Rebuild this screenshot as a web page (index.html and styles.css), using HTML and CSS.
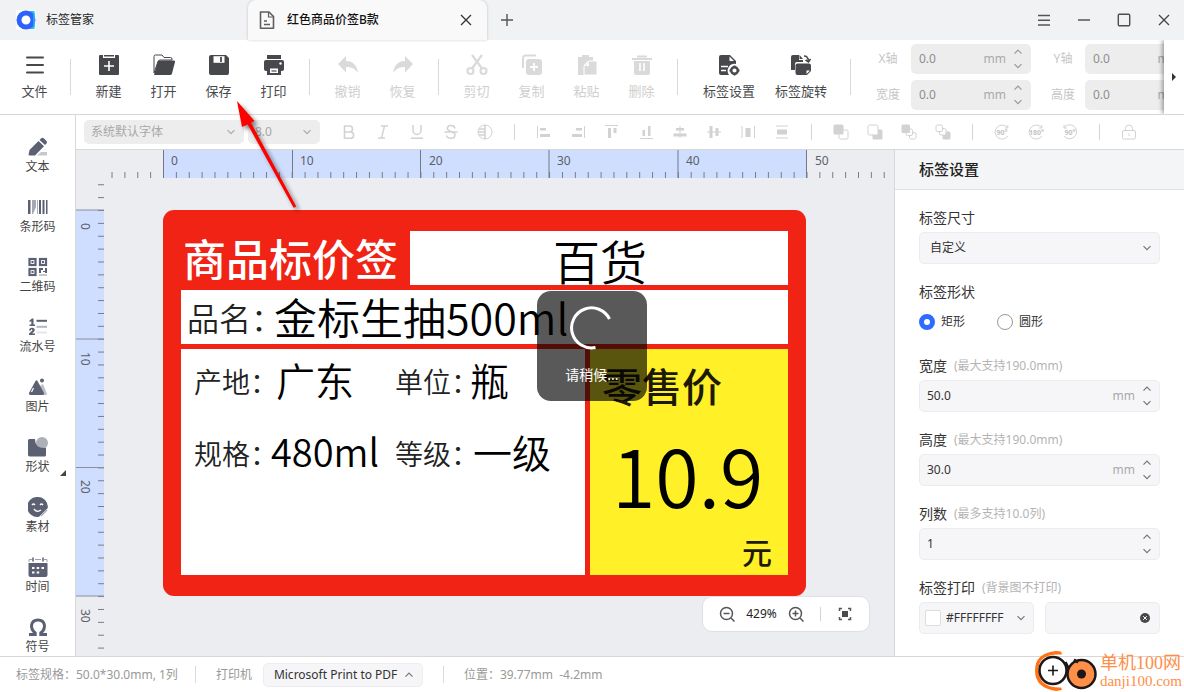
FILE: index.html
```html
<!DOCTYPE html>
<html lang="zh-CN">
<head>
<meta charset="utf-8">
<title>标签管家</title>
<link rel="stylesheet" href="styles.css">
</head>
<body>
<svg class="defs" aria-hidden="true">
  <symbol id="down" viewBox="0 0 10 10"><path d="M1.5 3.2 5 6.7l3.500-3.500" fill="none" stroke="currentColor" stroke-width="1.200"/></symbol>
  <symbol id="up" viewBox="0 0 10 10"><path d="M1.500 6.700 5 3.200l3.500 3.500" fill="none" stroke="currentColor" stroke-width="1.200"/></symbol>
</svg>

<header class="titlebar">
  <div class="app-tab">
    <svg class="app-logo" viewBox="0 0 20 20"><rect width="20" height="20" fill="#fff"/><path d="M18.500 1v18h-5l3-9-3-9z" fill="#1fc3f0"/><circle cx="10" cy="10" r="7" fill="#fff" stroke="#2f62fb" stroke-width="5"/><path d="M18 3v14" stroke="#22b8f4" stroke-width="1.500"/></svg>
    <span>标签管家</span>
  </div>
  <div class="doc-tab">
    <svg class="i18" viewBox="0 0 18 20" fill="none" stroke="#5d5e61" stroke-width="1.600"><path d="M2.500 2h8.500l4.500 4.500V18.200h-13z" stroke-linejoin="round"/><path d="M10.500 2v5h5" stroke-width="1.200"/><path d="M6 11h3M6 14.500h6"/></svg>
    <strong>红色商品价签B款</strong>
    <button class="plain" aria-label="关闭标签"><svg class="i14" viewBox="0 0 14 14" fill="none" stroke="#333" stroke-width="1.300"><path d="M2 2l10 10M12 2 2 12"/></svg></button>
  </div>
  <button class="plain add" aria-label="新标签"><svg class="i14" viewBox="0 0 14 14" fill="none" stroke="#555" stroke-width="1.400"><path d="M7 1v12M1 7h12"/></svg></button>
  <div class="window-buttons">
    <button class="plain" aria-label="菜单"><svg class="i14" viewBox="0 0 14 14" stroke="#555" stroke-width="1.400"><path d="M1 2.500h12M1 7.200h12M1 12h12"/></svg></button>
    <button class="plain" aria-label="最小化"><svg class="i14" viewBox="0 0 14 14" stroke="#555" stroke-width="1.500"><path d="M1 7h12"/></svg></button>
    <button class="plain" aria-label="最大化"><svg class="i14" viewBox="0 0 14 14" fill="none" stroke="#4c4d50" stroke-width="1.400"><rect x="1.300" y="1.300" width="11.400" height="11.400" rx="1"/></svg></button>
    <button class="plain" aria-label="关闭"><svg class="i14" viewBox="0 0 14 14" fill="none" stroke="#444" stroke-width="1.300"><path d="M2 2l10 10M12 2 2 12"/></svg></button>
  </div>
</header>

<nav class="toolbar">
  <button class="tool"><svg viewBox="0 0 24 24" stroke="#47484c" stroke-width="2" stroke-linecap="round"><path d="M4 4.500h16M4 12h16M4 19.500h16"/></svg>文件</button>
  <i class="sep"></i>
  <button class="tool"><svg viewBox="0 0 24 24"><path d="M3 2h3v3h12V2h3a1 1 0 0 1 1 1v18a1 1 0 0 1-1 1H3a1 1 0 0 1-1-1V3a1 1 0 0 1 1-1z"/><path d="M7 2h10v1.500H7z"/><path d="M12 8v10M7 13h10" stroke="#fff" stroke-width="1.600"/></svg>新建</button>
  <button class="tool"><svg viewBox="0 0 24 24"><path d="M2 20V3.500Q2 2 3.500 2H10l2 2.500h6.500q1.500 0 1.500 1.500v1H8Q6.500 7 6 8.500z" fill="#fff" stroke="#47484c"/><path d="M7 7.500h15q1.500 0 1 1.500l-3 11.500q-.4 1.500-2 1.500H2l3.500-12.500q.4-2 1.500-2z"/></svg>打开</button>
  <button class="tool"><svg viewBox="0 0 24 24"><path d="M4 2h15l3 3v15a2 2 0 0 1-2 2H4a2 2 0 0 1-2-2V4a2 2 0 0 1 2-2z"/><path d="M6.500 3.200h11v6.600h-11z" fill="#fff"/><path d="M14 4v5" stroke="#47484c" stroke-width="1.800"/></svg>保存</button>
  <button class="tool"><svg viewBox="0 0 24 24"><path d="M5 2h14v4H5z"/><rect x="2" y="7" width="20" height="11" rx="2"/><path d="M5 14h14v8H5z"/><path d="M8 15.500h8v4.500H8z" fill="#fff"/><path d="M9.500 18h5" stroke="#47484c" stroke-width="1.200"/><circle cx="18.500" cy="10.500" r="1.200" fill="#fff"/></svg>打印</button>
  <i class="sep"></i>
  <button class="tool off" disabled><svg viewBox="0 0 24 24"><path d="M10 3v5c7 0 11 4.500 12 12-3-4-6-6-12-6v5.500L2 11z"/></svg>撤销</button>
  <button class="tool off" disabled><svg viewBox="0 0 24 24"><path d="M14 3v5C7 8 3 12.500 2 20c3-4 6-6 12-6v5.500L22 11z"/></svg>恢复</button>
  <i class="sep"></i>
  <button class="tool off" disabled><svg viewBox="0 0 24 24" fill="none" stroke="#dadada" stroke-width="2.200"><circle cx="5.500" cy="18" r="3"/><circle cx="18.500" cy="18" r="3"/><path d="M17 15.500 7 2M7 15.500 17 2"/></svg>剪切</button>
  <button class="tool off" disabled><svg viewBox="0 0 24 24"><path d="M3 15V5a2.500 2.500 0 0 1 2.500-2.500H16" fill="none" stroke="#dadada" stroke-width="2"/><rect x="6" y="6" width="16" height="16" rx="3"/><path d="M14 10v8M10 14h8" stroke="#fff" stroke-width="1.800"/></svg>复制</button>
  <button class="tool off" disabled><svg viewBox="0 0 24 24"><path d="M7 2h7v2h4v4h-5l-4 4v10H3V4h4z"/><path d="M14 8h8v14H9V13z" stroke="#fff"/><path d="M14 9v4h-4z" fill="#fff"/></svg>粘贴</button>
  <button class="tool off" disabled><svg viewBox="0 0 24 24"><path d="M7 2.500h10v2H7zM2 5h20v2H2zM4 8h16v12a2 2 0 0 1-2 2H6a2 2 0 0 1-2-2z"/><path d="M10 10v8M14 10v8" stroke="#fff" stroke-width="1.600"/></svg>删除</button>
  <i class="sep"></i>
  <div class="wide-tools">
    <button class="tool"><svg viewBox="0 0 24 24"><path d="M4 2h9l6 6v3a7 7 0 0 0-7 11H4a2 2 0 0 1-2-2V4a2 2 0 0 1 2-2z"/><path d="M12.500 3.500V8H17z" fill="#fff"/><path d="M4 13.500h7M4 17.500h5" stroke="#fff" stroke-width="1.400"/><circle cx="17.500" cy="17.500" r="3.300" fill="none" stroke="#47484c" stroke-width="2.400"/><path d="M17.500 12.500v2M17.500 20.500v2M12.500 17.500h2M20.500 17.500h2" stroke="#47484c" stroke-width="2"/></svg>标签设置</button>
    <button class="tool"><svg viewBox="0 0 24 24"><path d="M4 2h6v5h4v2H8q-2 0-2 2v6H2V4q0-2 2-2z"/><path d="M10.500 2 14 6h-3.500z"/><path d="M15 3q4 0 4.500 5M16.500 7l3 2 2-3" fill="none" stroke="#47484c" stroke-width="1.600"/><path d="M8.500 10.500H20q2 0 2 2V18l-4 4H8.500q-2 0-2-2v-7.500q0-2 2-2z"/><path d="M17.500 21v-3.500H21z" fill="#fff"/></svg>标签旋转</button>
  </div>
  <i class="sep"></i>
  <div class="coords">
    <label for="px">X轴</label>
    <div class="number"><input id="px" value="0.0" disabled><span>mm</span><div class="steps"><button disabled aria-label="增加"><svg><use href="#up"/></svg></button><button disabled aria-label="减少"><svg><use href="#down"/></svg></button></div></div>
    <label for="py" class="second">Y轴</label>
    <div class="number"><input id="py" value="0.0" disabled><span>mm</span><div class="steps"></div></div>
    <label for="pw">宽度</label>
    <div class="number"><input id="pw" value="0.0" disabled><span>mm</span><div class="steps"><button disabled aria-label="增加"><svg><use href="#up"/></svg></button><button disabled aria-label="减少"><svg><use href="#down"/></svg></button></div></div>
    <label for="ph" class="second">高度</label>
    <div class="number"><input id="ph" value="0.0" disabled><span>mm</span><div class="steps"></div></div>
  </div>
  <button class="more" aria-label="更多"><svg viewBox="0 0 6 10"><path d="M1 1l4 4-4 4z" fill="#333"/></svg></button>
</nav>

<main class="main">
  <aside class="sidebar">
    <button><svg viewBox="0 0 20 20"><path d="M13 1.500q1.500-1.500 3 0l2.500 2.500q1 1.500 0 2.500l-1.500 1.500-5.500-5zM10.500 4l5.500 5.200L7 18.500H1.500L.5 18l1-5z"/><path d="M10 17.500l3-2.500h6v3.500H9z" opacity=".35"/></svg>文本</button>
    <button><svg viewBox="0 0 20 20"><path d="M0 3h2.500v14H0zM11 3h2v14h-2zM14.500 3h2v14h-2zM18 3h1.500v14H18z"/><path d="M4 3h4v7l-3 7H4z" opacity=".55"/><path d="M9 3h1v14H9z" opacity=".5"/></svg>条形码</button>
    <button><svg viewBox="0 0 20 20"><g fill="none" stroke="#5b6073" stroke-width="2.200"><rect x="1.500" y="2" width="6" height="6"/><rect x="12" y="2" width="6" height="6"/><rect x="1.500" y="12" width="6" height="6"/></g><path d="M3.500 4h2v2h-2zM14 4h2v2h-2zM3.500 14h2v2h-2zM11 11h4v3h2v-3h2v5h-2v-1h-2v-2h-2v3h-2z"/><path d="M11 17h8v2h-8z" opacity=".35"/></svg>二维码</button>
    <button><svg viewBox="0 0 20 20"><path d="M1.500 3.500 4 1.500h1.500v6h1.500V9H1.500V7.500h1.800V4.300l-1.800.8z"/><path d="M1 13.500q.3-2.800 3-2.800 3 .2 2.700 2.700-.3 1-2.500 3H7V18H1v-1.600l3.300-3q.3-1.200-.6-1.200-.8 0-1 1.300z"/><path d="M8.500 3.800h10.500" stroke="#5b6073" stroke-width="2"/><path d="M8.500 9.800h10.500" stroke="#b3b6c0" stroke-width="2"/><path d="M8.500 15.500h10.500" stroke="#e4e5e9" stroke-width="2"/></svg>流水号</button>
    <button><svg viewBox="0 0 20 20"><path d="M12 9l3-2 4 10q0 1-1 1h-4z" opacity=".4"/><path d="M7.500 4q1-1.500 2 0l6.500 12q.5 2-1.500 2h-12q-2 0-1.500-2z"/><circle cx="14" cy="3.500" r="2"/><path d="M3.500 15l2-4" stroke="#fff" stroke-width="1.300"/></svg>图片</button>
    <button class="has-more"><svg viewBox="0 0 20 20"><path d="M1.500 2H7q0 9 9 9h2v7q0 1.500-1.500 1.500h-14Q0 19.500 0 18V3.500Q0 2 1.500 2z"/><circle cx="14" cy="6" r="6" opacity=".5"/></svg>形状</button>
    <button><svg viewBox="0 0 20 20"><path d="M10 0a10 10 0 0 1 9.800 11L11 19.800A10 10 0 1 1 10 0z"/><path d="M4 8q1.500-2 3 0M12 8q1.500-2 3 0M6 12q3 4 7 1" fill="none" stroke="#fff" stroke-width="1.300"/><path d="M13 19l6-6" stroke="#aaadb9" stroke-width="1.500"/></svg>素材</button>
    <button><svg viewBox="0 0 20 20"><path d="M.5 6H19.500V18q0 2-2 2h-15q-2 0-2-2z"/><path d="M1 5V2.500h3M7 2.500h6M16 2.500h3V5" stroke="#9ea1ad" fill="none"/><path d="M5 .500v4M15 .500v4" stroke="#5b6073" stroke-width="1.500"/><path d="M4 11h2.500M8.700 11h2.500M13.500 11h2.500M4 15.500h2.500M8.700 15.500h2.500" stroke="#fff" stroke-width="2.200"/></svg>时间</button>
    <button><svg viewBox="0 0 20 20"><path d="M1 17.500H7.200v-1.500C1.500 11.500 2.500 3 10 3s8.500 8.500 2.800 13v1.500H19" stroke="#5b6073" stroke-width="3" fill="none"/></svg>符号</button>
  </aside>

  <div class="formatbar">
    <div class="select font"><select disabled aria-label="字体"><option>系统默认字体</option></select><svg><use href="#down"/></svg></div>
    <div class="select size"><select disabled aria-label="字号"><option>8.0</option></select><svg><use href="#down"/></svg></div>
    <div class="format-icons">
      <button aria-label="加粗"><svg viewBox="0 0 16 16" class="line"><path d="M3.500 2h5a3 3 0 0 1 0 6h-5zM3.500 8h6a3 3 0 0 1 0 6.300h-6z" stroke-width="1.600"/></svg></button>
      <button aria-label="斜体"><svg viewBox="0 0 16 16" class="line"><path d="M6 2h7M3 14h7M9.500 2l-3 12" stroke-width="1.400"/></svg></button>
      <button aria-label="下划线"><svg viewBox="0 0 16 16" class="line"><path d="M4 1v5.500a4 4 0 0 0 8 0V1M2 14.300h12" stroke-width="1.500"/></svg></button>
      <button aria-label="删除线"><svg viewBox="0 0 16 16" class="line"><path d="M12 4.500C11 .5 4 .8 4.300 4.500 4.500 8 12 7 12 11c0 4.500-8 4-8.500.5M1.500 8h13" stroke-width="1.500"/></svg></button>
      <button aria-label="反白"><svg viewBox="0 0 16 16" class="line"><circle cx="8" cy="8" r="7"/><path d="M8 1v14M2 5h6M1 8h7M2 11h6" stroke-width="1.600"/></svg></button>
      <i class="bar"></i>
      <button aria-label="左对齐"><svg viewBox="0 0 16 16"><path d="M1 2h1v12H1zM4 4h6v2.500H4zM4 10h10v3H4z"/></svg></button>
      <button aria-label="右对齐"><svg viewBox="0 0 16 16"><path d="M14 2h1v12h-1zM6 4h6v2.500H6zM2 10h10v3H2z"/></svg></button>
      <button aria-label="顶对齐"><svg viewBox="0 0 16 16"><path d="M1 1h13v1H1zM4 4h3v10H4zM9.500 4h3v5h-3z"/></svg></button>
      <button aria-label="底对齐"><svg viewBox="0 0 16 16"><path d="M2 14h13v1H2zM4.500 6h2.500v6H4.500zM10 2h2.500v10H10z"/></svg></button>
      <button aria-label="水平居中"><svg viewBox="0 0 16 16"><path d="M7.500 2h1v12h-1zM4 4h8v2.500H4zM1.500 9.500h13v3h-13z"/></svg></button>
      <button aria-label="垂直居中"><svg viewBox="0 0 16 16"><path d="M1 7.500h14v1H1zM3.500 2h3v12h-3zM9.500 4h3v8h-3z"/></svg></button>
      <button aria-label="水平分布"><svg viewBox="0 0 16 16"><path d="M1.500 2h1v12h-1zM14 2h1v12h-1zM5.500 4h5v9h-5z"/></svg></button>
      <button aria-label="垂直分布"><svg viewBox="0 0 16 16"><path d="M2 1.500h12v1H2zM2 13.500h12v1H2zM3 5.500h10v5H3z"/></svg></button>
      <i class="bar"></i>
      <button aria-label="置于顶层"><svg viewBox="0 0 16 16"><rect x="6" y="6" width="9" height="9" rx="1.500" class="line"/><rect x="0.500" y="0.500" width="10" height="10" rx="1.500"/></svg></button>
      <button aria-label="置于底层"><svg viewBox="0 0 16 16"><rect x="5.500" y="5.500" width="10" height="10" rx="1.500"/><rect x="1" y="1" width="10" height="10" rx="1.500" class="line paper"/></svg></button>
      <button aria-label="上移一层"><svg viewBox="0 0 16 16"><rect x="8.500" y="8.500" width="6.500" height="6.500" rx="1.500" class="line"/><rect x="5" y="5" width="6.500" height="6.500" rx="1.500" class="line paper"/><rect x="0.500" y="0.500" width="8.500" height="8.500" rx="1.500"/></svg></button>
      <button aria-label="下移一层"><svg viewBox="0 0 16 16"><rect x="7.500" y="7.500" width="8" height="8" rx="1.500"/><rect x="4.500" y="4.500" width="6.500" height="6.500" rx="1.500" class="line paper"/><rect x="1" y="1" width="6.500" height="6.500" rx="1.500" class="line paper"/></svg></button>
      <i class="bar"></i>
      <button aria-label="旋转90度"><svg viewBox="0 0 16 16" class="line"><path d="M13.500 3.500A7 7 0 1 0 14 12M13.800 1v3h-3"/><text x="2.500" y="10.800" class="deg">90°</text></svg></button>
      <button aria-label="旋转180度"><svg viewBox="0 0 16 16" class="line"><path d="M13.500 3.500A7 7 0 1 0 14 12M13.800 1v3h-3"/><text x="1" y="10.800" class="deg">180°</text></svg></button>
      <button aria-label="反向旋转90度"><svg viewBox="0 0 16 16" class="line"><path d="M2 3.500A7 7 0 1 1 2 12M2 1v3h3"/><text x="2.500" y="10.800" class="deg">90°</text></svg></button>
      <i class="bar"></i>
      <button aria-label="锁定"><svg viewBox="0 0 16 16" class="line"><rect x="1.500" y="6.500" width="13" height="8.500" rx="1.500"/><path d="M4.500 6.500V4.500a3.500 3.500 0 0 1 7 0v2M8 9.500v2.500"/></svg></button>
    </div>
  </div>

  <section class="workspace">
    <div class="corner"></div>
    <svg class="ruler-x">
      <defs><pattern id="tx" x="59" width="12.870" height="28" patternUnits="userSpaceOnUse"><path d="M0 22h1v6H0z" fill="#777b85"/></pattern></defs>
      <rect x="59" width="643" height="28" fill="#cfdeff"/>
      <rect x="4" width="778" height="28" fill="url(#tx)"/>
      <path d="M59.500 0v28M188.500 0v28M316.500 0v28M445 0v28M574 0v28M702.500 0v28" stroke="#73798a"/>
      <g class="rule-text"><text x="67" y="15">0</text><text x="196" y="15">10</text><text x="325" y="15">20</text><text x="453" y="15">30</text><text x="582" y="15">40</text><text x="711" y="15">50</text></g>
    </svg>
    <svg class="ruler-y">
      <defs><pattern id="ty" y="32" width="28" height="12.870" patternUnits="userSpaceOnUse"><path d="M22 0h6v1h-6z" fill="#777b85"/></pattern></defs>
      <rect y="32" width="28" height="386" fill="#cfdeff"/>
      <rect y="4" width="28" height="474" fill="url(#ty)"/>
      <path d="M0 32h28M0 161h28M0 289.500h28M0 418h28" stroke="#8a8f9c"/>
      <g class="rule-text"><text transform="translate(5 45) rotate(90)">0</text><text transform="translate(5 174) rotate(90)">10</text><text transform="translate(5 302) rotate(90)">20</text><text transform="translate(5 431) rotate(90)">30</text></g>
    </svg>
    <div class="stage">
      <div class="label">
        <svg class="label-bg" viewBox="0 0 643 386"><rect width="643" height="386" rx="11" fill="#f02314"/><g fill="#fff"><rect x="247" y="21" width="378" height="54"/><rect x="18" y="80" width="607" height="54"/><rect x="18" y="139" width="404" height="226"/></g><rect x="427" y="139" width="198" height="226" fill="#fff028"/></svg>
        <span class="obj head">商品标价签</span>
        <span class="obj category">百货</span>
        <span class="obj name-key">品名：</span>
        <span class="obj name">金标生抽500ml</span>
        <span class="obj key origin-key">产地：</span>
        <span class="obj val origin">广东</span>
        <span class="obj key unit-key">单位：</span>
        <span class="obj val unit">瓶</span>
        <span class="obj key spec-key">规格：</span>
        <span class="obj val spec">480ml</span>
        <span class="obj key grade-key">等级：</span>
        <span class="obj val grade">一级</span>
        <span class="obj retail">零售价</span>
        <span class="obj price">10.9</span>
        <span class="obj yuan">元</span>
      </div>
    </div>
    <div class="zoombar">
      <button aria-label="缩小"><svg viewBox="0 0 16 16"><circle cx="7.500" cy="7.500" r="6"/><path d="M12 12l3.500 3.500M4.500 7.500h6"/></svg></button>
      <span>429%</span>
      <button aria-label="放大"><svg viewBox="0 0 16 16"><circle cx="7.500" cy="7.500" r="6"/><path d="M12 12l3.500 3.500M4.500 7.500h6M7.500 4.500v6"/></svg></button>
      <i></i>
      <button aria-label="适应窗口"><svg viewBox="0 0 16 16"><path d="M2.500 5V2.500H5M11 2.500h2.500V5M13.500 11v2.500H11M5 13.500H2.500V11"/><rect x="5" y="5" width="6" height="6" fill="#4a4b4f" stroke="none"/></svg></button>
    </div>
  </section>

  <aside class="panel">
    <h2>标签设置</h2>
    <form class="fields">
      <div class="field"><label for="dim">标签尺寸</label>
        <div class="select box"><select id="dim"><option>自定义</option></select><svg><use href="#down"/></svg></div></div>
      <div class="field shape" role="radiogroup" aria-labelledby="shape-title"><span id="shape-title">标签形状</span>
        <div class="radios"><label><input type="radio" name="shape" checked>矩形</label><label><input type="radio" name="shape">圆形</label></div></div>
      <div class="field"><label for="w">宽度<small>(最大支持190.0mm)</small></label>
        <div class="number box"><input id="w" value="50.0"><span>mm</span><div class="steps"><button type="button" aria-label="增加"><svg><use href="#up"/></svg></button><button type="button" aria-label="减少"><svg><use href="#down"/></svg></button></div></div></div>
      <div class="field"><label for="h">高度<small>(最大支持190.0mm)</small></label>
        <div class="number box"><input id="h" value="30.0"><span>mm</span><div class="steps"><button type="button" aria-label="增加"><svg><use href="#up"/></svg></button><button type="button" aria-label="减少"><svg><use href="#down"/></svg></button></div></div></div>
      <div class="field"><label for="c">列数<small>(最多支持10.0列)</small></label>
        <div class="number box"><input id="c" value="1"><div class="steps"><button type="button" aria-label="增加"><svg><use href="#up"/></svg></button><button type="button" aria-label="减少"><svg><use href="#down"/></svg></button></div></div></div>
      <div class="field"><label for="color">标签打印<small>(背景图不打印)</small></label>
        <div class="pair">
          <div class="select box color"><i class="swatch"></i><select id="color"><option>#FFFFFFFF</option></select><svg><use href="#down"/></svg></div>
          <div class="number box"><input aria-label="背景图"><button type="button" class="clear" aria-label="清除"><svg viewBox="0 0 10 10"><circle cx="5" cy="5" r="5" fill="#48494d"/><path d="M3.200 3.200l3.600 3.600M6.800 3.200 3.200 6.800" stroke="#fff"/></svg></button></div>
        </div></div>
    </form>
  </aside>
</main>

<footer class="statusbar">
  <span>标签规格：50.0*30.0mm, 1列</span>
  <i></i>
  <label for="printer">打印机</label>
  <div class="select printer"><select id="printer"><option>Microsoft Print to PDF</option></select><svg><use href="#up"/></svg></div>
  <i></i>
  <span>位置：39.77mm&nbsp; -4.2mm</span>
</footer>

<div class="toast" role="status">
  <svg viewBox="0 0 44 44"><path d="M39.500 13A20 20 0 1 0 25.500 41.500" fill="none" stroke="#fff" stroke-width="3"/></svg>
  <span>请稍候...</span>
</div>

<svg class="pointer" viewBox="0 0 80 120" aria-hidden="true"><path d="M1 4l17.500 20-3.500 1.700L60 109q-.5 2-2.500 1.500L11.700 27.500 6 30z" fill="#fe0000"/></svg>

<div class="watermark">
  <svg viewBox="0 0 64 42"><path d="M22 1Q1 3 1 20.500T22 41l6-1-1-2.500Q5 38 4.500 20.500T28 4.500l-1-3z" fill="#ff7316"/><circle cx="19" cy="20.500" r="13.500" fill="#fff" stroke="#1d1717" stroke-width="2.500"/><path d="M19 15.500v10M14 20.500h10" stroke="#1d1717" stroke-width="1.600"/><circle cx="47.500" cy="24" r="14" fill="#ff8e47" stroke="#1d1717" stroke-width="2.500"/><circle cx="47.500" cy="24" r="4.500" fill="#1d1717"/><path d="M31.500 12l3 6M40 9.500l4 3" stroke="#1d1717" stroke-width="2.500"/></svg>
  <div><b>单机100网</b><span>danji100.com</span></div>
</div>
</body>
</html>
```
FILE: styles.css
```css
* { box-sizing: border-box; }
html, body { height: 100%; }
body {
  margin: 0;
  display: flex;
  flex-direction: column;
  overflow: hidden;
  background: #fff;
  color: #333;
  font: 12px/20px "Noto Sans", "Noto Sans CJK SC", sans-serif;
}
button, input, select { font: inherit; color: inherit; border: 0; background: none; padding: 0; margin: 0; }
button { display: flex; align-items: center; justify-content: center; }
input { min-width: 0; outline: 0; }
select { appearance: none; width: 100%; opacity: 1; }
svg { display: block; flex: none; }
.defs { position: absolute; width: 0; height: 0; }

/* title bar */
.titlebar { display: flex; height: 40px; flex: none; background: #f1f2f4; color: #222; }
.app-tab { display: flex; align-items: center; gap: 10px; width: 248px; padding-left: 16px; }
.app-logo { width: 20px; height: 20px; }
.doc-tab { display: flex; align-items: center; width: 239px; padding: 0 14px 0 10px; background: #f9f9f9; border-radius: 8px 8px 0 0; box-shadow: 0 0 3px #0003; }
.doc-tab strong { flex: 1; margin-left: 11px; font-weight: 500; color: #111; }
.i18 { width: 18px; height: 20px; }
.i14 { width: 14px; height: 14px; }
.add { margin-left: 13px; }
.window-buttons { display: flex; margin-left: auto; }
.window-buttons button { width: 40px; }

/* main toolbar */
.toolbar { position: relative; display: flex; align-items: center; height: 75px; flex: none; padding-left: 7px; border-bottom: 1px solid #d8d8d8; overflow: hidden; }
.tool { flex: none; flex-direction: column; gap: 4px; width: 55px; font-size: 13px; color: #47484c; }
.tool svg { width: 24px; height: 24px; }
.tool > svg { fill: #47484c; }
.tool.off { color: #cfcfcf; }
.tool.off > svg { fill: #dadada; }
.tool svg[stroke="#dadada"] { fill: none; }
.sep { flex: none; width: 1px; height: 36px; margin: 0 10px 0 8px; background: #d9d9d9; }
.wide-tools { display: flex; padding: 0 5px; }
.wide-tools .tool { width: 72px; }
.coords { display: grid; flex: none; grid-template-columns: 26px 120px 26px 120px; gap: 6px 10px; margin-left: 14px; align-items: center; color: #c6c6c6; text-align: center; }
.coords .second { margin: 0 -9px 0 9px; }
.coords .second + .number { margin: 0 -8px 0 8px; }
.number { display: flex; align-items: center; height: 30px; padding: 0 8px; border-radius: 5px; background: #ededed; }
.number input { flex: 1; width: 0; color: #8d8d8d; }
.number span { color: #a9a9a9; }
.steps { display: flex; flex-direction: column; gap: 4px; width: 10px; margin-left: 7px; color: #999; }
.steps svg { width: 10px; height: 10px; }
.more { position: absolute; right: 0; top: 0; width: 20px; height: 74px; background: #fff; box-shadow: -2px 0 4px #0005; }
.more svg { width: 6px; height: 10px; }

/* body grid */
.main { flex: 1; min-height: 0; display: grid; grid-template: 35px 1fr / 76px 1fr 290px; }
.sidebar { grid-row: 1 / 3; display: flex; flex-direction: column; min-height: 0; padding-top: 12px; border-right: 1px solid #d8d8d8; overflow: hidden; }
.sidebar button { position: relative; flex: none; flex-direction: column; height: 60px; color: #444; }
.sidebar svg { width: 20px; height: 20px; fill: #5b6073; }
.has-more::after { content: ""; position: absolute; right: 9px; bottom: 11px; border: solid transparent; border-width: 3px; border-right-color: #444; border-bottom-color: #444; }

.formatbar { grid-column: 2 / 4; display: flex; align-items: center; gap: 4px; padding-left: 8px; border-bottom: 1px solid #d8d8d8; }
.select { display: flex; align-items: center; position: relative; padding: 0 8px; border-radius: 5px; }
.select svg { width: 10px; height: 10px; color: #777; }
.formatbar .select { height: 24px; padding: 0 8px 0 7px; background: #ededed; }
.formatbar .select svg { color: #aaa; }
.formatbar select { color: #a8a8a8; }
.font { width: 160px; }
.size { width: 72px; }
.format-icons { display: flex; align-items: center; margin-left: 8px; }
.format-icons button { width: 34px; }
.format-icons svg { width: 16px; height: 16px; fill: #d2d2d2; overflow: visible; }
.format-icons .line { fill: none; stroke: #d2d2d2; }
.format-icons .paper { fill: #fff; }
.bar { width: 1px; height: 16px; margin: 0 12px; background: #d4d4d4; }
.deg { font-size: 7px; font-weight: 700; fill: #c4c4c4; stroke: none; }

/* canvas */
.workspace { position: relative; display: grid; grid-template: 28px 1fr / 28px 1fr; min-width: 0; min-height: 0; overflow: hidden; background: #ecedf1; }
.ruler-x { width: 100%; height: 28px; }
.ruler-y { width: 28px; height: 100%; }
.rule-text { fill: #5c606b; font-size: 12px; }
.stage { min-width: 0; min-height: 0; padding: 32px 59px; }
.label { position: relative; width: 643px; }
.label-bg { width: 100%; }
.obj { position: absolute; white-space: nowrap; color: #000; font-family: "Noto Sans CJK SC", sans-serif; font-weight: 350; line-height: 60px; }
.head { left: 20px; top: 17px; font-size: 43px; font-weight: 500; color: #fff; }
.category { left: 390px; top: 20px; font-size: 47px; }
.name-key { left: 24px; top: 77px; font-size: 32px; color: #222; }
.name { left: 111px; top: 76px; font-size: 43px; }
.key { font-size: 28px; color: #222; }
.val { font-size: 39px; }
.origin-key { left: 31px; top: 141px; }
.origin { left: 113px; top: 139px; }
.unit-key { left: 232px; top: 141px; }
.unit { left: 307px; top: 139px; }
.spec-key { left: 31px; top: 213px; }
.spec { left: 108px; top: 211px; font-size: 38px; }
.grade-key { left: 232px; top: 213px; }
.grade { left: 310px; top: 211px; }
.retail { left: 439px; top: 145px; font-size: 40px; font-weight: 500; color: #1c1a05; }
.price { left: 449px; top: 234px; font-size: 79px; }
.yuan { left: 579px; top: 311px; font-size: 30px; font-weight: 500; color: #1c1a05; }
.zoombar { position: absolute; right: 24px; bottom: 24px; display: flex; align-items: center; width: 168px; height: 36px; padding: 0 16px; border: 1px solid #dfe0e3; border-radius: 10px; background: #fff; }
.zoombar svg { width: 16px; height: 16px; fill: none; stroke: #55565a; stroke-width: 1.5; }
.zoombar span { flex: 1; text-align: center; color: #222; }
.zoombar i { width: 1px; height: 14px; margin: 0 16px; background: #d4d4d4; }

/* settings panel */
.panel { display: flex; flex-direction: column; min-height: 0; overflow: hidden; border-left: 1px solid #d8d8d8; background: #fff; }
.panel h2 { margin: 0; padding: 9px 24px 10px; font-size: 15px; font-weight: 500; color: #222; background: #f4f5f7; border-bottom: 1px solid #e2e3e6; }
.fields { display: flex; flex-direction: column; gap: 18px; padding: 18px 24px; }
.field { display: flex; flex-direction: column; gap: 4px; font-size: 14px; }
.field > label { display: flex; align-items: center; gap: 7px; height: 20px; }
.field small { font-size: 12px; color: #b4b4b4; }
.shape { gap: 10px; margin-bottom: 6px; }
.radios { display: flex; gap: 32px; font-size: 12px; }
.radios label { display: flex; align-items: center; gap: 6px; }
.radios input { appearance: none; width: 16px; height: 16px; border: 1px solid #999; border-radius: 50%; }
.radios input:checked { border: 5px solid #2f6bff; }
.box { height: 32px; padding: 0 7px; font-size: 12px; border: 1px solid #ececee; border-radius: 5px; background: #f6f6f8; color: #333; }
.box input { color: #333; }
.box .steps svg { color: #777; }
.box select { padding-left: 3px; }
.pair { display: grid; grid-template-columns: 1fr 1fr; gap: 11px; }
.swatch { flex: none; width: 16px; height: 16px; margin: 0 2px 0 -2px; border: 1px solid #ddd; border-radius: 2px; background: #fff; }
.clear { margin-right: 2px; }
.clear svg { width: 10px; height: 10px; }

/* status bar */
.statusbar { display: flex; align-items: center; flex: none; height: 36px; padding-left: 16px; border-top: 1px solid #d8d8d8; color: #999; }
.statusbar i { width: 1px; height: 17px; margin: 0 20px 0 17px; background: #dcdcdc; }
.printer { width: 160px; height: 24px; margin: 0 3px 0 11px; padding: 0 8px 0 10px; border: 1px solid #ededef; background: #f6f6f8; color: #333; }

/* overlays */
.toast { position: absolute; left: 537px; top: 291px; display: flex; flex-direction: column; align-items: center; gap: 15px; width: 110px; height: 110px; padding-top: 15px; border-radius: 14px; background: #000000a6; color: #fff; font-size: 14px; }
.toast svg { width: 44px; height: 44px; }
.pointer { position: absolute; left: 236px; top: 97px; width: 80px; height: 120px; filter: drop-shadow(3px 3px 2px #0007); }
.watermark { position: absolute; right: 2px; bottom: 0; display: flex; align-items: center; gap: 2px; color: #ff8e47; font-family: "Liberation Serif", "Noto Sans CJK SC", serif; }
.watermark svg { width: 64px; height: 42px; }
.watermark div { display: flex; flex-direction: column; }
.watermark b { font-size: 18px; font-weight: 400; }
.watermark span { font-size: 15px; line-height: 16px; }
```
